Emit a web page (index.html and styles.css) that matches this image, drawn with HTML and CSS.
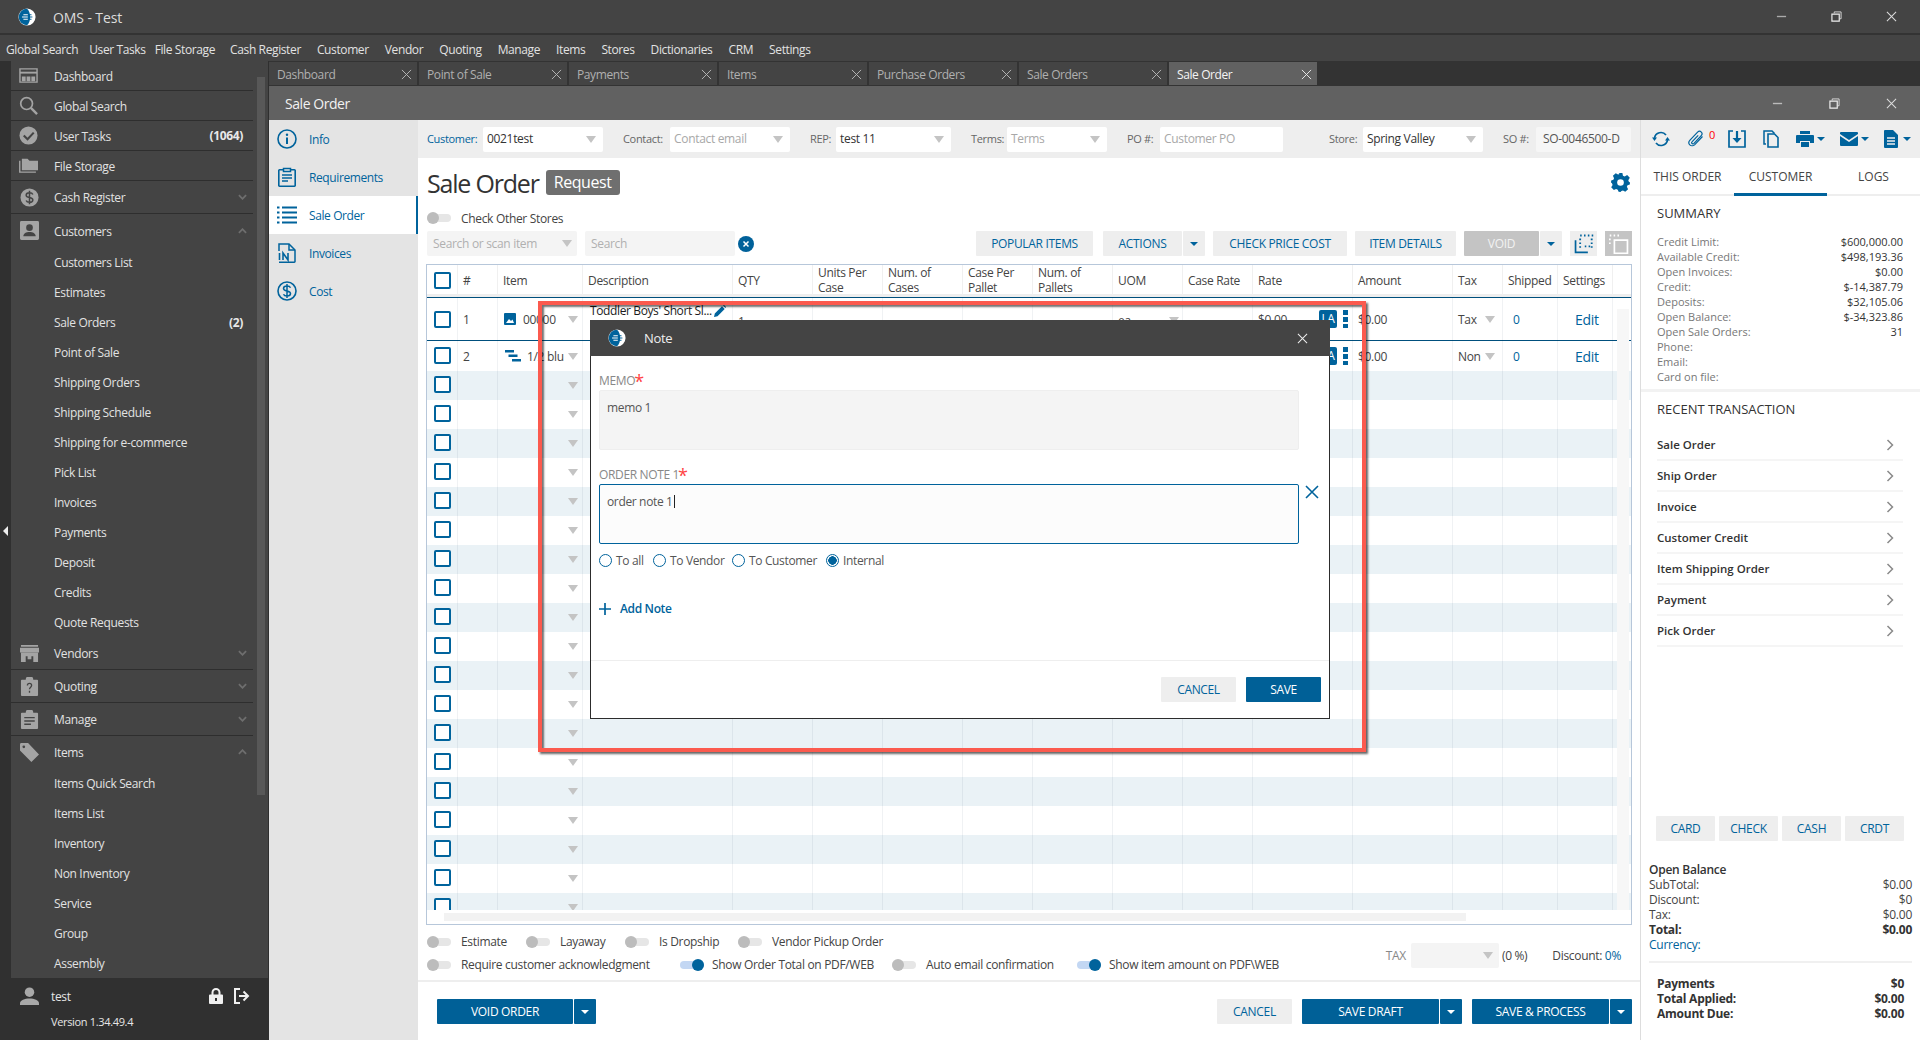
FILE: index.html
```html
<!DOCTYPE html>
<html lang="en">
<head>
<meta charset="utf-8">
<title>OMS - Test</title>
<link rel="stylesheet" href="styles.css">
</head>
<body>
<svg class="sprite" aria-hidden="true">
  <symbol id="i-logo" viewBox="0 0 20 20"><circle cx="10" cy="10" r="9.5" fill="#fff"/><path d="M10 .8a9.200 9.200 0 0 0 0 18.400c2-1.500 3.500-5 3.500-9.200S12 2.300 10 .8z" fill="#00639c"/><path d="M6 7.500h5M4.500 10h6.500M6 12.500h5" stroke="#fff" stroke-width="1.100"/><path d="M11 7.500h4M11 10h5M11 12.500h4" stroke="#00639c" stroke-width="1.100"/></symbol>
  <symbol id="i-dash" viewBox="0 0 20 16"><path d="M1 1h18v14H1z" fill="none" stroke="currentColor" stroke-width="1.500"/><path d="M1 5h18" stroke="currentColor" stroke-width="2"/><path d="M3 9h4v5H3zM8 9h4v5H8zM13 9h4v5h-4z" fill="currentColor"/></symbol>
  <symbol id="i-search" viewBox="0 0 20 20"><circle cx="8" cy="8" r="6.200" fill="none" stroke="currentColor" stroke-width="1.800"/><path d="M12.500 12.500 19 19" stroke="currentColor" stroke-width="2.500"/></symbol>
  <symbol id="i-check" viewBox="0 0 20 20"><circle cx="10" cy="10" r="9.500" fill="currentColor"/><path d="m5 10 4 4 6.500-7" fill="none" stroke="#444" stroke-width="2.200"/></symbol>
  <symbol id="i-folder" viewBox="0 0 20 16"><path d="M3 1h6l2 2h9v10H3z" fill="currentColor"/><path d="M.8 3v12h17" fill="none" stroke="currentColor" stroke-width="1.500"/></symbol>
  <symbol id="i-dollar" viewBox="0 0 20 20"><circle cx="10" cy="10" r="9.500" fill="currentColor"/><path d="M13.500 6.800C13 5.500 11.500 5 10 5 8 5 6.500 6 6.500 7.500 6.500 11 13.500 9 13.500 12.500 13.500 14 12 15 10 15c-1.500 0-3-.5-3.500-1.800M10 3v14" fill="none" stroke="#444" stroke-width="1.600"/></symbol>
  <symbol id="i-person-box" viewBox="0 0 20 20"><path d="M1.500 0h17A1.500 1.500 0 0 1 20 1.500v17a1.500 1.500 0 0 1-1.500 1.500h-17A1.500 1.500 0 0 1 0 18.500v-17A1.500 1.500 0 0 1 1.500 0z" fill="currentColor"/><circle cx="10" cy="7" r="3.500" fill="#444"/><path d="M3.500 16c0-3 3-4.500 6.500-4.500s6.500 1.500 6.500 4.500z" fill="#444"/></symbol>
  <symbol id="i-store" viewBox="0 0 20 18"><path d="M1 0h18v2H1zM0 3h20v5H0z" fill="currentColor"/><path d="M1 8h18v10h-5v-6H6v6H1zM8 12h4v3H8z" fill="currentColor"/></symbol>
  <symbol id="i-quote" viewBox="0 0 18 20"><path d="M1 3h4a4 4 0 0 1 8 0h4a1 1 0 0 1 1 1v15a1 1 0 0 1-1 1H1a1 1 0 0 1-1-1V4a1 1 0 0 1 1-1z" fill="currentColor"/><path d="M6.800 9c0-3 4.400-3 4.400 0 0 1.800-2.200 1.800-2.200 4M9 14.500v2" fill="none" stroke="#444" stroke-width="1.400"/></symbol>
  <symbol id="i-manage" viewBox="0 0 18 20"><path d="M1 3h4a4 4 0 0 1 8 0h4a1 1 0 0 1 1 1v15a1 1 0 0 1-1 1H1a1 1 0 0 1-1-1V4a1 1 0 0 1 1-1z" fill="currentColor"/><path d="M3.500 8h11M3.500 11.500h11M3.500 15h7" fill="none" stroke="#444" stroke-width="1.500"/></symbol>
  <symbol id="i-tag" viewBox="0 0 20 20"><path d="M0 1.500A1.500 1.500 0 0 1 1.500 0h7L20 12l-8 8L0 8z" fill="currentColor"/><circle cx="4" cy="4" r="1.400" fill="#444"/></symbol>
  <symbol id="i-user" viewBox="0 0 20 20"><circle cx="10" cy="5.500" r="5" fill="currentColor"/><path d="M0 19v-2c0-3 5-5 10-5s10 2 10 5v2z" fill="currentColor"/></symbol>
  <symbol id="i-lock" viewBox="0 0 14 16"><path d="M3.500 7V4.500a3.500 3.500 0 0 1 7 0V7" fill="none" stroke="currentColor" stroke-width="2"/><path d="M1 6.500h12a1 1 0 0 1 1 1V15a1 1 0 0 1-1 1H1a1 1 0 0 1-1-1V7.500a1 1 0 0 1 1-1z" fill="currentColor"/><path d="M7 10v3" stroke="#303030" stroke-width="2"/></symbol>
  <symbol id="i-logout" viewBox="0 0 16 16"><path d="M6 1H1v14h5" fill="none" stroke="currentColor" stroke-width="2"/><path d="M5 8h8M9.500 3.500 14 8l-4.500 4.500" fill="none" stroke="currentColor" stroke-width="2"/></symbol>
  <symbol id="i-info" viewBox="0 0 20 20"><circle cx="10" cy="10" r="9" fill="none" stroke="currentColor" stroke-width="1.600"/><path d="M10 8.500V15" stroke="currentColor" stroke-width="2"/><circle cx="10" cy="5.800" r="1.200" fill="currentColor"/></symbol>
  <symbol id="i-req" viewBox="0 0 18 20"><path d="M5 2.800H1.500a.7.7 0 0 0-.7.7v15a.7.7 0 0 0 .7.7h15a.7.7 0 0 0 .7-.7v-15a.7.7 0 0 0-.7-.7H13" fill="none" stroke="currentColor" stroke-width="1.600"/><path d="M5.500 1.500h7v3h-7z" fill="none" stroke="currentColor" stroke-width="1.500"/><path d="M4 8h10M4 11h10M4 14h6" stroke="currentColor" stroke-width="1.500"/></symbol>
  <symbol id="i-list" viewBox="0 0 20 20"><path d="M5 2.500h15M5 7.500h15M5 12.500h15M5 17.500h15M0 2.500h2.500M0 7.500h2.500M0 12.500h2.500M0 17.500h2.500" stroke="currentColor" stroke-width="2.200"/></symbol>
  <symbol id="i-inv" viewBox="0 0 18 20"><path d="M1 8V1h10l6 6v11.500a.7.7 0 0 1-.7.7H1" fill="none" stroke="currentColor" stroke-width="1.500"/><path d="M11 1v6h6" fill="none" stroke="currentColor" stroke-width="1.500"/><path d="M1.500 10v7M5 17v-7l5 7v-7" fill="none" stroke="currentColor" stroke-width="1.600"/></symbol>
  <symbol id="i-cost" viewBox="0 0 20 20"><circle cx="10" cy="10" r="9" fill="none" stroke="currentColor" stroke-width="1.600"/><path d="M13.500 6.800C13 5.500 11.500 5 10 5 8 5 6.500 6 6.500 7.500 6.500 11 13.500 9 13.500 12.500 13.500 14 12 15 10 15c-1.500 0-3-.5-3.500-1.800M10 3v14" fill="none" stroke="currentColor" stroke-width="1.500"/></symbol>
  <symbol id="i-gear" viewBox="0 0 20 20"><path d="M8 0h4l.6 2.800 1.800.8L17 2l2.800 3-1.600 2.500.6 1.700L20 10l-.2 2-2.400.9-.7 1.700L18 17l-3 2.800-2.400-1.500-1.600.6L10 20l-2-.2-.9-2.300-1.700-.7L3 18l-2.800-3 1.500-2.400-.7-1.700L0 10l.2-2 2.300-.9.7-1.700L2 3l3-2.800 2.400 1.500 1.700-.6z" fill="currentColor"/><circle cx="10" cy="10" r="3.500" fill="#fff"/></symbol>
  <symbol id="i-refresh" viewBox="0 0 18 16"><path d="M2.500 7a6.500 6.500 0 0 1 11.500-3M15.500 9A6.500 6.500 0 0 1 4 12" fill="none" stroke="currentColor" stroke-width="1.700"/><path d="m0 6.500 5 0-2.500 3.500zM18 9.500l-5 0 2.500-3.500z" fill="currentColor"/></symbol>
  <symbol id="i-clip" viewBox="0 0 18 18"><path d="M15.500 6.500 7.800 14.600c-1.500 1.500-3.800 1.500-5 .3-1.300-1.300-1.100-3.300.2-4.700l7.600-8c1.100-1.100 2.700-1.100 3.700-.1 1 1 .9 2.500-.1 3.600l-7.200 7.600c-.6.600-1.500.7-2 .2-.5-.5-.4-1.300.2-1.900l6-6.300" fill="none" stroke="currentColor" stroke-width="1.200"/></symbol>
  <symbol id="i-save" viewBox="0 0 18 18"><path d="M5 1H1v16h16V1h-4" fill="none" stroke="currentColor" stroke-width="1.700"/><path d="M9 1v10" stroke="currentColor" stroke-width="2.200"/><path d="M4.500 8 9 13l4.500-5z" fill="currentColor"/></symbol>
  <symbol id="i-copy" viewBox="0 0 16 18"><path d="M3 14H1V1h8l2.500 2.500" fill="none" stroke="currentColor" stroke-width="1.500"/><path d="M5 4h6.500L15 7.500V17H5z" fill="none" stroke="currentColor" stroke-width="1.600"/></symbol>
  <symbol id="i-print" viewBox="0 0 18 16"><path d="M4 0h10v3H4zM1 4h16a1 1 0 0 1 1 1v7h-4v-2H4v2H0V5a1 1 0 0 1 1-1zM5 11h8v5H5z" fill="currentColor"/></symbol>
  <symbol id="i-mail" viewBox="0 0 18 14"><path d="M1 0h16a1 1 0 0 1 1 1v1L9 8 0 2V1a1 1 0 0 1 1-1zM0 4l9 6 9-6v9a1 1 0 0 1-1 1H1a1 1 0 0 1-1-1z" fill="currentColor"/></symbol>
  <symbol id="i-doc" viewBox="0 0 14 18"><path d="M1 0h8l5 5v12a1 1 0 0 1-1 1H1a1 1 0 0 1-1-1V1a1 1 0 0 1 1-1z" fill="currentColor"/><path d="M3 8h8M3 11h8M3 14h8" stroke="#eee" stroke-width="1.300"/></symbol>
  <symbol id="i-pic" viewBox="0 0 12 12"><path d="M1 0h10a1 1 0 0 1 1 1v10a1 1 0 0 1-1 1H1a1 1 0 0 1-1-1V1a1 1 0 0 1 1-1z" fill="currentColor"/><path d="m2 10 3-4 2 2 1.500-1.500L10 10z" fill="#fff"/></symbol>
  <symbol id="i-tree" viewBox="0 0 16 12"><path d="M0 0h9v2.400H0zM3.500 4.500h9v2.400h-9zM7 9h9v2.400H7z" fill="currentColor"/></symbol>
  <symbol id="i-pen" viewBox="0 0 12 12"><path d="M0 12l.8-3.500L8 1.300 10.700 4 3.500 11.200zM9 .5 10 0l2 2-.5 1z" fill="currentColor"/></symbol>
  <symbol id="i-sel-a" viewBox="0 0 26 26"><path d="M8 2h2M13 2h2M18 2h2M23 2h2M23 6v2M23 11v2M23 16v2M8 6v2M8 11v2M8 16v2M14 16h2M19 16h2" stroke="currentColor" stroke-width="2.400"/><path d="M2 8v16h16" fill="none" stroke="currentColor" stroke-width="2.200"/></symbol>
  <symbol id="i-sel-b" viewBox="0 0 26 26"><path d="M1 2h2M6 2h2M11 2h2M1 6v2M1 11v2" stroke="#fff" stroke-width="2.400"/><path d="M7 8h17v17H7z" fill="none" stroke="#fff" stroke-width="2.200"/></symbol>
</svg>

<div class="app">
  <header class="titlebar">
    <svg class="logo"><use href="#i-logo"/></svg>
    <span class="app-name">OMS - Test</span>
    <div class="winctl">
      <svg viewBox="0 0 12 12"><path d="M1 6h10" stroke="#aaa" stroke-width="1.500"/></svg>
      <svg viewBox="0 0 12 12"><path d="M3.500 2.500V1h7.500v7.500H9.500" fill="none" stroke="#ddd"/><path d="M1 3.500h8v7.500H1z" fill="none" stroke="#eee" stroke-width="1.300"/></svg>
      <svg viewBox="0 0 12 12"><path d="m1 1 10 10M11 1 1 11" stroke="#ddd" stroke-width="1.100"/></svg>
    </div>
  </header>
  <nav class="menubar">
    <span>Global Search</span><span>User Tasks</span><span>File Storage</span><span>Cash Register</span><span>Customer</span><span>Vendor</span><span>Quoting</span><span>Manage</span><span>Items</span><span>Stores</span><span>Dictionaries</span><span>CRM</span><span>Settings</span>
  </nav>
  <div class="desk">
    <aside class="sidebar">
      <div class="side-main">
        <div class="strip"><i class="strip-arrow"></i></div>
        <div class="side-list">
          <div class="s-row sep"><svg class="s-ico"><use href="#i-dash"/></svg><span>Dashboard</span></div>
          <div class="s-row sep"><svg class="s-ico"><use href="#i-search"/></svg><span>Global Search</span></div>
          <div class="s-row sep"><svg class="s-ico"><use href="#i-check"/></svg><span>User Tasks</span><b class="cnt">(1064)</b></div>
          <div class="s-row sep"><svg class="s-ico"><use href="#i-folder"/></svg><span>File Storage</span></div>
          <div class="s-row group sep"><svg class="s-ico"><use href="#i-dollar"/></svg><span>Cash Register</span><svg class="chev" viewBox="0 0 10 6"><path d="m1 1 4 4 4-4"/></svg></div>
          <div class="s-row group"><svg class="s-ico"><use href="#i-person-box"/></svg><span>Customers</span><svg class="chev" viewBox="0 0 10 6"><path d="m1 5 4-4 4 4"/></svg></div>
          <div class="s-sub">Customers List</div>
          <div class="s-sub">Estimates</div>
          <div class="s-sub">Sale Orders<b class="cnt">(2)</b></div>
          <div class="s-sub">Point of Sale</div>
          <div class="s-sub">Shipping Orders</div>
          <div class="s-sub">Shipping Schedule</div>
          <div class="s-sub">Shipping for e-commerce</div>
          <div class="s-sub">Pick List</div>
          <div class="s-sub">Invoices</div>
          <div class="s-sub">Payments</div>
          <div class="s-sub">Deposit</div>
          <div class="s-sub">Credits</div>
          <div class="s-sub">Quote Requests</div>
          <div class="s-row group sep"><svg class="s-ico"><use href="#i-store"/></svg><span>Vendors</span><svg class="chev" viewBox="0 0 10 6"><path d="m1 1 4 4 4-4"/></svg></div>
          <div class="s-row group sep"><svg class="s-ico"><use href="#i-quote"/></svg><span>Quoting</span><svg class="chev" viewBox="0 0 10 6"><path d="m1 1 4 4 4-4"/></svg></div>
          <div class="s-row group sep"><svg class="s-ico"><use href="#i-manage"/></svg><span>Manage</span><svg class="chev" viewBox="0 0 10 6"><path d="m1 1 4 4 4-4"/></svg></div>
          <div class="s-row group items"><svg class="s-ico"><use href="#i-tag"/></svg><span>Items</span><svg class="chev" viewBox="0 0 10 6"><path d="m1 5 4-4 4 4"/></svg></div>
          <div class="s-sub">Items Quick Search</div>
          <div class="s-sub">Items List</div>
          <div class="s-sub">Inventory</div>
          <div class="s-sub">Non Inventory</div>
          <div class="s-sub">Service</div>
          <div class="s-sub">Group</div>
          <div class="s-sub">Assembly</div>
        </div>
        <div class="side-scroll"><i class="side-thumb"></i></div>
      </div>
      <div class="side-foot">
        <div class="foot-user"><svg class="foot-ava"><use href="#i-user"/></svg><span>test</span><svg class="foot-lock"><use href="#i-lock"/></svg><svg class="foot-out"><use href="#i-logout"/></svg></div>
        <div class="foot-ver">Version 1.34.49.4</div>
      </div>
    </aside>

    <div class="workspace">
      <div class="tabs">
        <div class="tab"><span>Dashboard</span><svg viewBox="0 0 12 12"><path d="m1 1 10 10M11 1 1 11"/></svg></div>
        <div class="tab"><span>Point of Sale</span><svg viewBox="0 0 12 12"><path d="m1 1 10 10M11 1 1 11"/></svg></div>
        <div class="tab"><span>Payments</span><svg viewBox="0 0 12 12"><path d="m1 1 10 10M11 1 1 11"/></svg></div>
        <div class="tab"><span>Items</span><svg viewBox="0 0 12 12"><path d="m1 1 10 10M11 1 1 11"/></svg></div>
        <div class="tab"><span>Purchase Orders</span><svg viewBox="0 0 12 12"><path d="m1 1 10 10M11 1 1 11"/></svg></div>
        <div class="tab"><span>Sale Orders</span><svg viewBox="0 0 12 12"><path d="m1 1 10 10M11 1 1 11"/></svg></div>
        <div class="tab active"><span>Sale Order</span><svg viewBox="0 0 12 12"><path d="m1 1 10 10M11 1 1 11"/></svg></div>
      </div>
      <div class="win-title">
        <span>Sale Order</span>
        <div class="winctl small">
          <svg viewBox="0 0 12 12"><path d="M1 6h10" stroke="#bbb" stroke-width="1.500"/></svg>
          <svg viewBox="0 0 12 12"><path d="M3.500 2.500V1h7.500v7.500H9.500" fill="none" stroke="#ddd"/><path d="M1 3.500h8v7.500H1z" fill="none" stroke="#eee" stroke-width="1.300"/></svg>
          <svg viewBox="0 0 12 12"><path d="m1 1 10 10M11 1 1 11" stroke="#ddd" stroke-width="1.100"/></svg>
        </div>
      </div>
      <div class="win-body">
        <nav class="doc-nav">
          <div class="d-row"><svg><use href="#i-info"/></svg><span>Info</span></div>
          <div class="d-row"><svg><use href="#i-req"/></svg><span>Requirements</span></div>
          <div class="d-row active"><svg><use href="#i-list"/></svg><span>Sale Order</span></div>
          <div class="d-row"><svg><use href="#i-inv"/></svg><span>Invoices</span></div>
          <div class="d-row"><svg><use href="#i-cost"/></svg><span>Cost</span></div>
        </nav>

        <main class="main">
          <div class="filterbar">
            <label class="f-lbl link w-cust">Customer:</label><div class="f-sel w120"><span>0021test</span><i class="caret"></i></div>
            <label class="f-lbl ml20 w-cont">Contact:</label><div class="f-sel w120 ph"><span>Contact email</span><i class="caret"></i></div>
            <label class="f-lbl ml20 w-rep">REP:</label><div class="f-sel w115"><span>test 11</span><i class="caret"></i></div>
            <label class="f-lbl ml20 w-terms">Terms:</label><div class="f-sel w100 ph"><span>Terms</span><i class="caret"></i></div>
            <label class="f-lbl ml20 w-po">PO #:</label><div class="f-sel w123 ph"><span>Customer PO</span></div>
            <label class="f-lbl ml46 w-store">Store:</label><div class="f-sel w120"><span>Spring Valley</span><i class="caret"></i></div>
            <label class="f-lbl ml20 w-so">SO #:</label><div class="f-sel w95 so"><span>SO-0046500-D</span></div>
          </div>

          <div class="content">
            <div class="heading">
              <h1>Sale Order</h1>
              <span class="badge">Request</span>
              <svg class="gear"><use href="#i-gear"/></svg>
            </div>
            <div class="toggle-row"><i class="tgl"></i><span>Check Other Stores</span></div>
            <div class="toolbar">
              <div class="t-sel"><span>Search or scan item</span><i class="caret"></i></div>
              <div class="t-input">Search</div>
              <svg class="clear" viewBox="0 0 16 16"><circle cx="8" cy="8" r="8" fill="#00619a"/><path d="m5.500 5.500 5 5M10.500 5.500l-5 5" stroke="#fff" stroke-width="1.500"/></svg>
              <button class="btn lite w117 push">POPULAR ITEMS</button>
              <button class="btn lite w79">ACTIONS</button><button class="btn lite drop"><i class="caret-b"></i></button>
              <button class="btn lite w134">CHECK PRICE COST</button>
              <button class="btn lite w101">ITEM DETAILS</button>
              <button class="btn off w75">VOID</button><button class="btn lite drop"><i class="caret-b"></i></button>
              <span class="sq"><svg><use href="#i-sel-a"/></svg></span>
              <span class="sq gray"><svg><use href="#i-sel-b"/></svg></span>
            </div>

            <div class="grid-box">
              <div class="g-head">
                <div><i class="chk"></i></div><div>#</div><div>Item</div><div>Description</div><div>QTY</div><div>Units Per Case</div><div>Num. of Cases</div><div>Case Per Pallet</div><div>Num. of Pallets</div><div>UOM</div><div>Case Rate</div><div>Rate</div><div>Amount</div><div>Tax</div><div>Shipped</div><div>Settings</div>
              </div>
              <div class="g-body">
                <div class="g-row r1">
                  <div class="c"><i class="chk"></i></div><div class="c">1</div>
                  <div class="c item"><svg class="pic"><use href="#i-pic"/></svg><span>00000</span><i class="caret"></i></div>
                  <div class="c desc"><span>Toddler Boys' Short Sl...</span><svg class="pen"><use href="#i-pen"/></svg></div>
                  <div class="c qty">1</div><div></div><div></div><div></div><div></div>
                  <div class="c uom">ea<i class="caret"></i></div><div></div>
                  <div class="c rate">$0.00<b class="la">LA</b><i class="dots"></i></div>
                  <div class="c">$0.00</div>
                  <div class="c tax">Tax<i class="caret"></i></div>
                  <div class="c ship">0</div>
                  <div class="c edit">Edit</div>
                </div>
                <div class="g-row r2">
                  <div class="c"><i class="chk"></i></div><div class="c">2</div>
                  <div class="c item"><svg class="tree"><use href="#i-tree"/></svg><span>1/2 blu</span><i class="caret"></i></div>
                  <div></div><div></div><div></div><div></div><div></div><div></div><div></div><div></div>
                  <div class="c rate"><b class="la">LA</b><i class="dots"></i></div>
                  <div class="c">$0.00</div>
                  <div class="c tax">Non<i class="caret"></i></div>
                  <div class="c ship">0</div>
                  <div class="c edit">Edit</div>
                </div>
                <div class="g-row e"><div class="c"><i class="chk"></i></div><div></div><div class="c item"><i class="caret"></i></div></div>
                <div class="g-row e"><div class="c"><i class="chk"></i></div><div></div><div class="c item"><i class="caret"></i></div></div>
                <div class="g-row e"><div class="c"><i class="chk"></i></div><div></div><div class="c item"><i class="caret"></i></div></div>
                <div class="g-row e"><div class="c"><i class="chk"></i></div><div></div><div class="c item"><i class="caret"></i></div></div>
                <div class="g-row e"><div class="c"><i class="chk"></i></div><div></div><div class="c item"><i class="caret"></i></div></div>
                <div class="g-row e"><div class="c"><i class="chk"></i></div><div></div><div class="c item"><i class="caret"></i></div></div>
                <div class="g-row e"><div class="c"><i class="chk"></i></div><div></div><div class="c item"><i class="caret"></i></div></div>
                <div class="g-row e"><div class="c"><i class="chk"></i></div><div></div><div class="c item"><i class="caret"></i></div></div>
                <div class="g-row e"><div class="c"><i class="chk"></i></div><div></div><div class="c item"><i class="caret"></i></div></div>
                <div class="g-row e"><div class="c"><i class="chk"></i></div><div></div><div class="c item"><i class="caret"></i></div></div>
                <div class="g-row e"><div class="c"><i class="chk"></i></div><div></div><div class="c item"><i class="caret"></i></div></div>
                <div class="g-row e"><div class="c"><i class="chk"></i></div><div></div><div class="c item"><i class="caret"></i></div></div>
                <div class="g-row e"><div class="c"><i class="chk"></i></div><div></div><div class="c item"><i class="caret"></i></div></div>
                <div class="g-row e"><div class="c"><i class="chk"></i></div><div></div><div class="c item"><i class="caret"></i></div></div>
                <div class="g-row e"><div class="c"><i class="chk"></i></div><div></div><div class="c item"><i class="caret"></i></div></div>
                <div class="g-row e"><div class="c"><i class="chk"></i></div><div></div><div class="c item"><i class="caret"></i></div></div>
                <div class="g-row e"><div class="c"><i class="chk"></i></div><div></div><div class="c item"><i class="caret"></i></div></div>
                <div class="g-row e"><div class="c"><i class="chk"></i></div><div></div><div class="c item"><i class="caret"></i></div></div>
                <div class="g-row e"><div class="c"><i class="chk"></i></div><div></div><div class="c item"><i class="caret"></i></div></div>
                <div class="col-lines"><div></div><div></div><div></div><div></div><div></div><div></div><div></div><div></div><div></div><div></div><div></div><div></div><div></div><div></div><div></div><div></div></div>
                <div class="v-scroll"></div>
              </div>
              <div class="h-scroll"><i></i></div>
            </div>

            <div class="options">
              <div class="opt-left">
                <div class="opt-row">
                  <div class="opt w99"><i class="tgl"></i><span>Estimate</span></div>
                  <div class="opt w99"><i class="tgl"></i><span>Layaway</span></div>
                  <div class="opt w113"><i class="tgl"></i><span>Is Dropship</span></div>
                  <div class="opt"><i class="tgl"></i><span>Vendor Pickup Order</span></div>
                </div>
                <div class="opt-row">
                  <div class="opt w253"><i class="tgl"></i><span>Require customer acknowledgment</span></div>
                  <div class="opt w212"><i class="tgl on"></i><span class="nar">Show Order Total on PDF/WEB</span></div>
                  <div class="opt w185"><i class="tgl"></i><span>Auto email confirmation</span></div>
                  <div class="opt"><i class="tgl on"></i><span class="nar">Show item amount on PDF\WEB</span></div>
                </div>
              </div>
              <div class="opt-tax">
                <span class="tax-lbl">TAX</span><div class="tax-sel"><i class="caret"></i></div><span>(0 %)</span>
                <span class="disc">Discount: <a>0%</a></span>
              </div>
            </div>

            <div class="footer">
              <button class="btn solid w136">VOID ORDER</button><button class="btn solid drop"><i class="caret-w"></i></button>
              <button class="btn lite w75 push">CANCEL</button>
              <button class="btn solid w137">SAVE DRAFT</button><button class="btn solid drop"><i class="caret-w"></i></button>
              <button class="btn solid w137 ml10">SAVE &amp; PROCESS</button><button class="btn solid drop"><i class="caret-w"></i></button>
            </div>
          </div>
        </main>

        <aside class="panel">
          <div class="p-tools">
            <svg class="pt18"><use href="#i-refresh"/></svg>
            <span class="clip"><svg class="pt18"><use href="#i-clip"/></svg><em>0</em></span>
            <svg class="pt18 pt-save"><use href="#i-save"/></svg>
            <svg class="pt18 pt-copy"><use href="#i-copy"/></svg>
            <span class="pt-m"><svg class="pt18"><use href="#i-print"/></svg><i class="caret-b"></i></span>
            <span class="pt-m"><svg class="pt18"><use href="#i-mail"/></svg><i class="caret-b"></i></span>
            <span class="pt-m"><svg class="pt18 pt-doc"><use href="#i-doc"/></svg><i class="caret-b"></i></span>
          </div>
          <div class="p-tabs"><span>THIS ORDER</span><span class="sel">CUSTOMER</span><span>LOGS</span></div>
          <section class="summary">
            <h3>SUMMARY</h3>
            <dl>
              <div><dt>Credit Limit:</dt><dd>$600,000.00</dd></div>
              <div><dt>Available Credit:</dt><dd>$498,193.36</dd></div>
              <div><dt>Open Invoices:</dt><dd>$0.00</dd></div>
              <div><dt>Credit:</dt><dd>$-14,387.79</dd></div>
              <div><dt>Deposits:</dt><dd>$32,105.06</dd></div>
              <div><dt>Open Balance:</dt><dd>$-34,323.86</dd></div>
              <div><dt>Open Sale Orders:</dt><dd>31</dd></div>
              <div><dt>Phone:</dt><dd></dd></div>
              <div><dt>Email:</dt><dd></dd></div>
              <div><dt>Card on file:</dt><dd></dd></div>
            </dl>
          </section>
          <section class="recent">
            <h3>RECENT TRANSACTION</h3>
            <div class="rt">Sale Order<svg viewBox="0 0 8 12"><path d="m1.500 1 5 5-5 5"/></svg></div>
            <div class="rt">Ship Order<svg viewBox="0 0 8 12"><path d="m1.500 1 5 5-5 5"/></svg></div>
            <div class="rt">Invoice<svg viewBox="0 0 8 12"><path d="m1.500 1 5 5-5 5"/></svg></div>
            <div class="rt">Customer Credit<svg viewBox="0 0 8 12"><path d="m1.500 1 5 5-5 5"/></svg></div>
            <div class="rt">Item Shipping Order<svg viewBox="0 0 8 12"><path d="m1.500 1 5 5-5 5"/></svg></div>
            <div class="rt">Payment<svg viewBox="0 0 8 12"><path d="m1.500 1 5 5-5 5"/></svg></div>
            <div class="rt">Pick Order<svg viewBox="0 0 8 12"><path d="m1.500 1 5 5-5 5"/></svg></div>
          </section>
          <div class="pay-btns"><button class="btn lite">CARD</button><button class="btn lite">CHECK</button><button class="btn lite">CASH</button><button class="btn lite">CRDT</button></div>
          <section class="totals">
            <div class="tt-h">Open Balance</div>
            <div class="tt"><span>SubTotal:</span><span>$0.00</span></div>
            <div class="tt"><span>Discount:</span><span>$0</span></div>
            <div class="tt"><span>Tax:</span><span>$0.00</span></div>
            <div class="tt strong"><span>Total:</span><span>$0.00</span></div>
            <div class="tt link"><span>Currency:</span></div>
          </section>
          <section class="pays">
            <div class="tt strong"><span>Payments</span><span>$0</span></div>
            <div class="tt strong"><span>Total Applied:</span><span>$0.00</span></div>
            <div class="tt strong"><span>Amount Due:</span><span>$0.00</span></div>
          </section>
        </aside>
      </div>
    </div>
  </div>

  <div class="callout"></div>
  <div class="modal">
    <div class="m-head"><svg class="m-logo"><use href="#i-logo"/></svg><span>Note</span><svg class="m-x" viewBox="0 0 12 12"><path d="m1 1 10 10M11 1 1 11"/></svg></div>
    <div class="m-body">
      <div class="m-lbl">MEMO<sup>*</sup></div>
      <div class="m-area ro">memo 1</div>
      <div class="m-lbl l2">ORDER NOTE 1<sup>*</sup></div>
      <div class="m-line">
        <div class="m-area focus">order note 1<i class="cursor"></i></div>
        <svg class="m-del" viewBox="0 0 14 14"><path d="m1 1 12 12M13 1 1 13"/></svg>
      </div>
      <div class="radios">
        <span class="radio r-all"><i></i>To all</span>
        <span class="radio r-ven"><i></i>To Vendor</span>
        <span class="radio r-cus"><i></i>To Customer</span>
        <span class="radio on"><i></i>Internal</span>
      </div>
      <div class="add-note"><svg viewBox="0 0 12 12"><path d="M6 0v12M0 6h12"/></svg>Add Note</div>
    </div>
    <div class="m-foot"><button class="btn lite w75">CANCEL</button><button class="btn solid w75">SAVE</button></div>
  </div>
</div>
</body>
</html>
```
FILE: styles.css
```css
* { box-sizing: border-box; }
html, body { margin: 0; padding: 0; }
body { width: 1920px; height: 1040px; overflow: hidden; font-family: "Open Sans", "Noto Sans", sans-serif; font-size: 12px; color: #333; background: #fff; }
.sprite { position: absolute; width: 0; height: 0; }
button { font: inherit; letter-spacing: inherit; border: 0; padding: 0; }
i { display: block; font-style: normal; }
h1, h3, dl, dd { margin: 0; font-weight: normal; }

.app { position: relative; display: flex; flex-direction: column; width: 1920px; height: 1040px; }

/* title + menu */
.titlebar { height: 35px; flex: none; display: flex; align-items: center; background: #444; border-bottom: 2px solid #333; color: #ddd; }
.logo { width: 18px; height: 18px; margin-left: 18px; }
.app-name { margin-left: 17px; font-size: 14px; padding-top: 1px; letter-spacing: -.1px; }
.winctl { margin-left: auto; display: flex; gap: 44px; margin-right: 23px; }
.winctl svg { width: 11px; height: 11px; }
.menubar { height: 26px; flex: none; display: flex; align-items: center; gap: 16px; padding: 3px 0 0 6px; background: #444; color: #e2e2e2; letter-spacing: -.38px; }
.menubar span:nth-child(1) { margin-right: -5px; }
.menubar span:nth-child(2) { margin-right: -7px; }
.menubar span:nth-child(3) { margin-right: -1px; }
.desk { flex: 1; display: flex; min-height: 0; }

/* sidebar */
.sidebar { width: 269px; flex: none; display: flex; flex-direction: column; background: #444; border-right: 1px solid #2f2f2f; letter-spacing: -.34px; }
.side-main { flex: 1; display: flex; min-height: 0; overflow: hidden; }
.strip { width: 11px; flex: none; background: #303030; display: flex; align-items: center; }
.strip-arrow { width: 0; height: 0; margin: 22px 0 0 3px; border: 5px solid transparent; border-left-width: 0; border-right: 5px solid #eee; }
.side-list { width: 242px; flex: none; color: #e2e2e2; }
.s-row { height: 30px; display: flex; align-items: center; position: relative; }
.s-row > span { padding-top: 1px; }
.s-row.group { height: 33px; }
.s-row.group.items { height: 32px; }
.s-row.sep { border-bottom: 1px solid #2e2e2e; }
.s-ico { width: 19px; height: 19px; margin-left: 8px; flex: none; color: #a4a4a4; }
.s-row span { margin-left: 16px; }
.s-row.group span { margin-left: 15px; }
.s-row.group .s-ico { margin-left: 9px; }
.cnt { margin-left: auto; margin-right: 10px; font-weight: 700; color: #e8e8e8; }
.chev { width: 9px; height: 6px; margin-left: auto; margin-right: 6px; fill: none; stroke: #6e6e6e; stroke-width: 2; }
.s-sub { height: 30px; display: flex; align-items: center; padding-left: 43px; }
.side-scroll { width: 8px; margin: 16px 0 0 4px; flex: none; }
.side-thumb { width: 8px; height: 718px; background: #585858; }
.side-foot { height: 62px; flex: none; background: #303030; color: #e6e6e6; }
.foot-user { display: flex; align-items: center; height: 36px; }
.foot-ava { width: 19px; height: 19px; margin-left: 20px; color: #a8a8a8; }
.foot-user span { margin-left: 12px; }
.foot-lock { width: 14px; height: 16px; margin-left: auto; color: #f0f0f0; }
.foot-out { width: 16px; height: 16px; margin: 0 18px 0 11px; color: #f0f0f0; }
.foot-ver { padding-left: 51px; font-size: 11px; line-height: 12px; margin-top: 2px; }

/* tabs */
.workspace { flex: 1; min-width: 0; display: flex; flex-direction: column; }
.tabs { height: 25px; flex: none; display: flex; background: #333; padding-top: 1px; letter-spacing: -.4px; }
.tab { width: 150px; height: 23px; display: flex; align-items: center; justify-content: space-between; padding: 1px 5px 0 8px; background: #444; color: #b0b0b0; border-right: 2px solid #333; }
.tab svg { width: 11px; height: 11px; fill: none; stroke: #bbb; stroke-width: 1; }
.tab.active { background: #616161; color: #f4f4f4; }
.tab.active svg { stroke: #f0f0f0; }
.win-title { height: 34px; flex: none; display: flex; align-items: center; padding-left: 16px; background: #616161; color: #f2f2f2; font-size: 14px; letter-spacing: -.45px; }
.winctl.small { gap: 46px; margin-right: 23px; }
.win-body { flex: 1; display: flex; min-height: 0; }

/* doc nav */
.doc-nav { width: 149px; flex: none; background: #e4e4e4; color: #00639c; letter-spacing: -.4px; }
.d-row { height: 38px; display: flex; align-items: center; padding-left: 8px; }
.d-row svg { width: 20px; height: 20px; flex: none; }
.d-row span { margin-left: 12px; }
.d-row.active { background: #fff; border-right: 2px solid #00639c; }

/* main */
.main { width: 1222px; flex: none; display: flex; flex-direction: column; background: #fff; letter-spacing: -.32px; }
.filterbar { height: 38px; flex: none; display: flex; align-items: center; padding-left: 9px; background: #eee; color: #666; }
.f-lbl { white-space: nowrap; font-size: 11px; padding-bottom: 2px; }
.f-lbl.link { color: #00639c; }
.w-cust { width: 56px; } .w-cont { width: 47px; } .w-rep { width: 26px; } .w-terms { width: 36px; } .w-po { width: 33px; } .w-store { width: 34px; } .w-so { width: 33px; }
.ml20 { margin-left: 20px; } .ml46 { margin-left: 46px; } .ml10 { margin-left: 10px; }
.f-sel { height: 25px; background: #fff; display: flex; align-items: center; justify-content: space-between; padding: 0 7px 0 4px; border-radius: 2px; color: #333; font-size: 12px; }
.f-sel span { padding-bottom: 2px; }
.f-sel.ph { color: #a8a8a8; }
.f-sel.so { background: #f6f6f6; color: #555; padding: 0 0 0 7px; white-space: nowrap; }
.w120 { width: 120px; } .w115 { width: 115px; } .w100 { width: 100px; } .w123 { width: 123px; } .w95 { width: 95px; }
.caret { width: 0; height: 0; border-left: 5px solid transparent; border-right: 5px solid transparent; border-top: 7px solid #c4c4c4; flex: none; }
.caret-b, .caret-w { width: 0; height: 0; border-left: 4px solid transparent; border-right: 4px solid transparent; border-top: 4px solid #00639c; }
.caret-w { border-top-color: #fff; }

.content { flex: 1; display: flex; flex-direction: column; padding: 12px 8px 0; min-height: 0; }
.heading { display: flex; align-items: center; height: 25px; flex: none; }
.heading h1 { font-size: 25px; margin-left: 1px; color: #333; letter-spacing: -1.2px; }
.badge { margin-left: 7px; height: 25px; padding: 0 8px; background: #6f6f6f; border-radius: 3px; color: #fff; font-size: 16px; line-height: 25px; letter-spacing: -.4px; }
.gear { width: 19px; height: 19px; margin-left: auto; margin-right: 2px; color: #00639c; }
.toggle-row { display: flex; align-items: center; height: 24px; margin-top: 11px; flex: none; color: #444; padding-left: 1px; }
.toggle-row span { margin-left: 10px; }
.tgl { position: relative; width: 24px; height: 8px; border-radius: 4px; background: #e6e6e6; flex: none; }
.tgl::after { content: ""; position: absolute; left: 0; top: -2px; width: 12px; height: 12px; border-radius: 50%; background: #bcbcbc; }
.tgl.on { background: #c3d7f3; }
.tgl.on::after { left: 12px; background: #00639c; }

.toolbar { display: flex; align-items: center; height: 25px; flex: none; margin-top: 1px; }
.t-sel { width: 150px; height: 25px; margin-left: 1px; background: #f4f4f4; display: flex; align-items: center; justify-content: space-between; padding: 0 5px 0 6px; color: #b0b0b0; border-radius: 2px; }
.t-input { width: 150px; height: 25px; margin-left: 8px; padding-left: 6px; line-height: 25px; background: #f4f4f4; color: #b0b0b0; border-radius: 2px; }
.clear { width: 16px; height: 16px; margin-left: 3px; flex: none; }
.btn { height: 25px; display: flex; align-items: center; justify-content: center; flex: none; font-size: 12px; border-radius: 1px; white-space: nowrap; }
.btn.lite { background: #eee; color: #00639c; }
.btn.solid { background: #006097; color: #fff; }
.btn.off { background: #c4c4c4; color: #f2f2f2; }
.btn.drop { width: 22px; margin-left: 1px; }
.toolbar .btn { margin-right: 8px; }
.toolbar .btn.w79, .toolbar .btn.off { margin-right: 0; }
.toolbar .btn.w117 { margin-right: 10px; }
.push { margin-left: auto; }
.w117 { width: 117px; } .w79 { width: 79px; } .w134 { width: 134px; } .w101 { width: 101px; } .w75 { width: 75px; } .w136 { width: 136px; } .w137 { width: 137px; }
.sq { width: 27px; height: 25px; flex: none; display: flex; align-items: center; justify-content: center; background: #eee; color: #00639c; }
.sq svg { width: 20px; height: 20px; }
.sq.gray { background: #c4c4c4; margin-left: 8px; }

/* grid */
.grid-box { position: relative; height: 661px; flex: none; margin-top: 8px; border: 1px solid #b7c7da; display: flex; flex-direction: column; overflow: hidden; }
.g-head, .g-row, .col-lines { display: grid; grid-template-columns: 31px 40px 85px 150px 80px 70px 80px 70px 80px 70px 70px 100px 100px 50px 55px 55px; }
.g-head { height: 32px; flex: none; border-bottom: 3px solid #eee; color: #444; line-height: 15px; }
.g-head > div { display: flex; align-items: center; padding: 0 5px; border-right: 1px solid #f0f0f0; white-space: normal; }
.g-head > div:first-child { padding-left: 7px; }
.g-body { position: relative; flex: 1; min-height: 0; overflow: hidden; }
.g-row { align-items: center; height: 29px; position: relative; }
.g-row.r1 { height: 44px; border-top: 1px solid #004f7d; border-bottom: 1px solid #004f7d; }
.g-row.r2 { height: 30px; }
.g-row.e:nth-child(odd) { background: #eaf2f6; }
.g-row.e:nth-child(even) { background: #fff; }
.c { display: flex; align-items: center; padding-left: 5px; color: #444; min-width: 0; white-space: nowrap; overflow: hidden; }
.c:first-child { padding-left: 7px; overflow: visible; }
.chk { width: 17px; height: 17px; border: 2px solid #00639c; border-radius: 2px; background: #fff; flex: none; }
.g-row.r2 .chk { margin-top: -2px; }
.g-row.e .chk { margin-top: -2px; }
.c.item { padding-right: 5px; justify-content: flex-end; }
.c.item span { flex: 1; overflow: hidden; }
.pic { width: 12px; height: 12px; color: #00639c; flex: none; margin-right: 7px; margin-left: 1px; }
.tree { width: 16px; height: 12px; color: #00639c; flex: none; margin-right: 6px; margin-left: 2px; }
.desc { align-self: start; padding-top: 4px; padding-left: 7px; color: #1c1c1c; font-size: 12px; letter-spacing: -.38px; }
.pen { width: 12px; height: 12px; color: #00639c; margin-left: 2px; flex: none; }
.qty { padding-top: 4px; }
.uom { justify-content: space-between; padding-right: 4px; padding-top: 2px; }
.rate { position: relative; overflow: visible; justify-content: flex-start; }
.la { position: absolute; left: 66px; top: 50%; margin-top: -9px; width: 18px; height: 18px; background: #00639c; color: #fff; text-align: center; line-height: 18px; font-weight: 400; border-radius: 2px; }
.dots { position: absolute; left: 90px; top: 50%; margin-top: -9px; width: 5px; height: 18px; background: linear-gradient(#00639c 0 5px, transparent 5px 7px, #00639c 7px 12px, transparent 12px 14px, #00639c 14px 18px); }
.tax { justify-content: space-between; padding-right: 8px; }
.ship { color: #00639c; padding-left: 10px; }
.edit { color: #00639c; font-size: 14px; padding-left: 17px; }
.col-lines { position: absolute; left: 0; top: 0; bottom: 0; pointer-events: none; }
.col-lines div { border-right: 1px solid rgba(0, 30, 60, .06); }
.v-scroll { position: absolute; right: 2px; top: 12px; bottom: 0; width: 12px; background: #f7f7f7; }
.h-scroll { height: 14px; flex: none; background: #fff; padding: 3px 0 3px 17px; }
.h-scroll i { width: 1022px; height: 8px; background: #f2f2f2; }

/* options */
.options { display: flex; height: 57px; flex: none; border-bottom: 2px solid #eee; margin: 0 -8px; padding: 0 8px; }
.opt-left { padding-top: 5px; }
.opt-row { display: flex; align-items: center; height: 23px; }
.opt { display: flex; align-items: center; color: #444; padding-left: 1px; }
.opt span { margin-left: 10px; white-space: nowrap; }
.opt span.nar { margin-left: 8px; }
.w99 { width: 99px; } .w113 { width: 113px; } .w253 { width: 253px; } .w212 { width: 212px; } .w185 { width: 185px; }
.opt-tax { display: flex; align-items: center; height: 25px; margin: 18px 0 0 auto; color: #444; padding-right: 11px; }
.tax-lbl { color: #888; margin-right: 5px; }
.tax-sel { width: 88px; height: 25px; background: #f4f4f4; display: flex; align-items: center; justify-content: flex-end; padding-right: 6px; margin-right: 3px; border-radius: 2px; }
.disc { margin-left: 25px; }
.disc a { color: #00639c; }

.footer { display: flex; align-items: center; height: 25px; flex: none; margin-top: 17px; padding: 0 0 0 11px; }
.footer .w75 { margin-right: 10px; }

/* right panel */
.panel { flex: 1; min-width: 0; display: flex; flex-direction: column; border-left: 1px solid #ddd; background: #fff; color: #444; }
.p-tools { height: 38px; flex: none; position: relative; background: #eee; display: flex; align-items: center; padding-left: 11px; color: #00639c; }
.pt18 { width: 18px; height: 18px; flex: none; }
.p-tools > svg { margin-right: 17px; }
.clip { position: relative; display: flex; width: 18px; margin-right: 23px; }
.clip em { position: absolute; left: 22px; top: -3px; font-style: normal; color: #f00; font-size: 11px; }
.pt-copy { width: 16px; }
.pt-m { display: flex; align-items: center; gap: 3px; margin-right: 15px; }
.pt-doc { width: 14px; }
.pt-m:last-child .caret-b { margin-left: 2px; }
.p-tabs { height: 38px; flex: none; display: flex; border-bottom: 2px solid #eee; color: #444; font-size: 12px; }
.p-tabs span { width: 93px; height: 38px; line-height: 38px; text-align: center; }
.p-tabs .sel { border-bottom: 3px solid #00639c; }
.summary { padding: 8px 17px 8px 16px; border-bottom: 3px solid #f2f2f2; height: 196px; flex: none; }
.recent { padding: 8px 17px 0 16px; }
.panel h3 { font-size: 13px; color: #333; line-height: 18px; }
.summary dl { margin-top: 12px; color: #777; font-size: 11px; line-height: 15px; }
.summary dl div { display: flex; justify-content: space-between; }
.summary dd { color: #333; }
.recent h3 { margin-bottom: 12px; }
.rt { height: 31px; display: flex; align-items: center; justify-content: space-between; border-bottom: 2px solid #f5f5f5; font-weight: 600; color: #333; font-size: 11.5px; padding-right: 9px; }
.rt svg { width: 8px; height: 12px; fill: none; stroke: #8a8a8a; stroke-width: 1.500; }
.pay-btns { display: flex; gap: 4px; margin: 169px 0 0 15px; letter-spacing: -.3px; }
.pay-btns .btn { width: 59px; }
.totals { margin: 2px 8px 0; padding: 19px 0 9px; border-bottom: 2px solid #f0f0f0; line-height: 15px; color: #444; letter-spacing: -.25px; }
.tt-h { font-weight: 600; color: #333; }
.tt { display: flex; justify-content: space-between; }
.tt.strong { font-weight: 700; color: #333; }
.tt.link { color: #00639c; }
.pays { margin: 0 16px; padding-top: 13px; line-height: 15px; letter-spacing: -.25px; }

/* callout + modal */
.callout { position: absolute; left: 538px; top: 301px; width: 828px; height: 451px; border: 4px solid #fb5a4e; box-shadow: 2px 2px 2px rgba(0,0,0,.6), inset 2px 2px 2px rgba(0,0,0,.55); }
.modal { position: absolute; left: 590px; top: 320px; width: 740px; height: 399px; background: #fff; border: 1px solid #2c2c2c; border-top: 0; display: flex; flex-direction: column; letter-spacing: -.35px; }
.m-head { height: 36px; flex: none; display: flex; align-items: center; background: #444; color: #eee; margin: 0 -1px; font-size: 13px; }
.m-logo { width: 18px; height: 18px; margin-left: 18px; }
.m-head span { margin-left: 18px; }
.m-x { width: 11px; height: 11px; margin-left: auto; margin-right: 22px; fill: none; stroke: #eee; stroke-width: 1.100; }
.m-body { flex: 1; padding: 15px 0 0 8px; }
.m-lbl { height: 19px; line-height: 19px; color: #888; }
.m-lbl sup { color: #f44; font-size: 18px; line-height: 0; vertical-align: baseline; position: relative; top: 3px; margin-left: -1px; }
.m-lbl.l2 { margin-top: 15px; }
.m-area { width: 700px; height: 60px; padding: 8px 7px; background: #f4f4f4; border: 1px solid #eee; border-radius: 2px; color: #555; }
.m-area.focus { display: flex; align-items: flex-start; background: #fcfcfc; border: 1px solid #00639c; }
.cursor { width: 1px; height: 13px; background: #222; margin-left: 1px; margin-top: 2px; }
.m-line { display: flex; align-items: flex-start; }
.m-del { width: 14px; height: 14px; margin: 1px 0 0 6px; fill: none; stroke: #00639c; stroke-width: 1.600; }
.radios { display: flex; margin-top: 9px; height: 14px; align-items: center; color: #555; }
.radio { display: flex; align-items: center; gap: 4px; }
.radio i { width: 13px; height: 13px; border: 1px solid #00639c; border-radius: 50%; background: #fff; }
.radio.on i { background: radial-gradient(circle, #00639c 0 4px, #fff 4.500px); }
.r-all { width: 54px; } .r-ven { width: 79px; } .r-cus { width: 94px; }
.add-note { display: flex; align-items: center; gap: 9px; margin-top: 33px; color: #00639c; font-weight: 600; }
.add-note svg { width: 12px; height: 12px; fill: none; stroke: #00639c; stroke-width: 1.700; }
.m-foot { height: 58px; flex: none; border-top: 1px solid #eee; display: flex; justify-content: flex-end; gap: 10px; padding: 16px 8px 0 0; }
```
